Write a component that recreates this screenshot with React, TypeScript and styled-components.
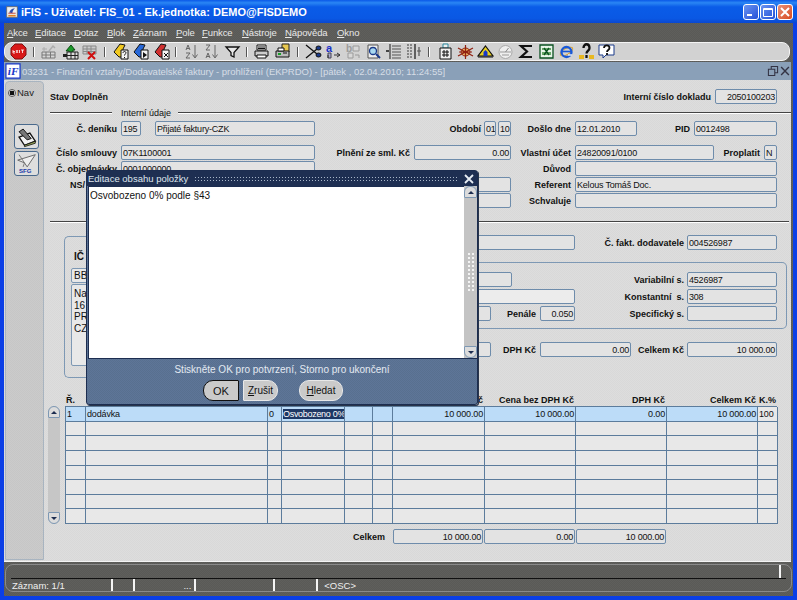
import type { ReactNode } from "react"
import styled, { createGlobalStyle } from "styled-components"

const Global = createGlobalStyle`
  html, body {
    margin: 0;
    padding: 0;
    overflow: hidden;
    background: #0a45e0;
  }
`

const sans = `"Liberation Sans", Arial, sans-serif`

const Window = styled.div`
  position: relative;
  width: 797px;
  height: 600px;
  box-sizing: border-box;
  display: flex;
  flex-direction: column;
  background: #0b3fe6;
  font-family: ${sans};
  overflow: hidden;
`

const TitleBar = styled.div`
  height: 23px;
  flex: none;
  display: flex;
  align-items: center;
  padding: 0 4px 0 5px;
  background: linear-gradient(180deg, #0a58e8 0%, #2a86f4 12%, #0a5ce8 30%, #0a58e4 80%, #0a48d0 100%);
`

const TitleText = styled.span`
  margin-left: 2px;
  flex: 1;
  color: #fff;
  font-size: 11px;
  font-weight: 700;
  white-space: nowrap;
`

const WinButton = styled.div<{ $close?: boolean }>`
  width: 16px;
  height: 16px;
  margin-left: 1px;
  border: 1px solid #fff;
  border-radius: 3px;
  box-sizing: border-box;
  display: flex;
  align-items: center;
  justify-content: center;
  background: ${({ $close }) =>
    $close ? "linear-gradient(135deg, #e89078, #d84a20)" : "linear-gradient(135deg, #6a94f0, #2450d8)"};
`

const Inner = styled.div`
  flex: 1;
  min-height: 0;
  margin: 0 4px 4px 4px;
  display: flex;
  flex-direction: column;
  background: repeating-conic-gradient(#5f5f5c 0 25%, #5a5a57 0 50%) 0 0 / 2px 2px;
`

const MenuBar = styled.div`
  height: 19px;
  flex: none;
  display: flex;
  align-items: center;
  padding-left: 3px;
`

const MenuItem = styled.span<{ $w: number }>`
  width: ${({ $w }) => $w}px;
  flex: none;
  color: #e8e8e8;
  font-size: 9.5px;
  letter-spacing: -0.1px;
  white-space: nowrap;
`

const Mnemonic = styled.span`
  text-decoration: underline;
`

const Toolbar = styled.div`
  height: 19px;
  flex: none;
  margin-right: 3px;
  box-sizing: border-box;
  border: 1px solid #f4f4f4;
  border-radius: 8px;
  display: flex;
  align-items: center;
  background: #d2d2d2;
`

const ToolSlot = styled.span<{ $ml: number }>`
  margin-left: ${({ $ml }) => $ml}px;
  width: 17px;
  height: 17px;
  flex: none;
  display: block;
`

const ToolSep = styled.span<{ $ml: number }>`
  margin-left: ${({ $ml }) => $ml}px;
  width: 1px;
  height: 10px;
  flex: none;
  border-right: 1px solid #fff;
  background: #555;
`

const SubTitle = styled.div`
  height: 18px;
  flex: none;
  margin: 1px 2px 0 0;
  display: flex;
  align-items: center;
  padding-left: 1px;
  background: #8aa0b8;
`

const SubTitleText = styled.span`
  flex: 1;
  margin-left: 1px;
  color: #d6dde6;
  font-size: 9.5px;
  letter-spacing: -0.03px;
  white-space: nowrap;
`

const Main = styled.div`
  height: 482px;
  flex: none;
  margin-right: 2px;
  display: flex;
  box-sizing: border-box;
  background: repeating-conic-gradient(#dddddd 0 25%, #d8d8d8 0 50%) 0 0 / 2px 2px;
  border-bottom: 1px solid #f4f4f4;
`

const SidePanel = styled.div`
  width: 39px;
  flex: none;
  margin: 1px 0 1px 1px;
  box-sizing: border-box;
  border: 1px solid #a8b4c0;
  border-radius: 4px 4px 0 0;
  display: flex;
  flex-direction: column;
  align-items: center;
  background: repeating-conic-gradient(#cbcbcb 0 25%, #c6c6c6 0 50%) 0 0 / 2px 2px;
`

const NavTab = styled.div`
  align-self: flex-start;
  margin: 5px 0 0 2px;
  display: flex;
  align-items: center;
  gap: 1px;
  color: #222;
  font-size: 9.5px;
`

const Radio = styled.span`
  width: 8px;
  height: 8px;
  box-sizing: border-box;
  border: 1px solid #555;
  border-radius: 50%;
  background: radial-gradient(circle, #111 0 2.2px, #eee 2.6px);
`

const SideButton = styled.div<{ $mt: number }>`
  margin: ${({ $mt }) => $mt}px 0 0 3px;
  width: 25px;
  height: 25px;
  box-sizing: border-box;
  border: 1px solid #49698c;
  border-radius: 3px;
  background: #dedede;
`

const Form = styled.div`
  flex: 1;
  min-width: 0;
  padding-top: 9px;
  display: flex;
  flex-direction: column;
`

const Row = styled.div<{ $mt?: number; $h?: number }>`
  margin-top: ${({ $mt }) => $mt ?? 0}px;
  height: ${({ $h }) => $h ?? 15}px;
  flex: none;
  display: flex;
  align-items: stretch;
`

const Label = styled.span<{ $w: number; $left?: boolean; $ml?: number }>`
  width: ${({ $w }) => $w}px;
  margin-left: ${({ $ml }) => $ml ?? 0}px;
  flex: none;
  display: flex;
  align-items: center;
  justify-content: ${({ $left }) => ($left ? "flex-start" : "flex-end")};
  color: #111;
  font-size: 9px;
  font-weight: 700;
  white-space: pre;
`

const Field = styled.span<{ $w: number; $ml?: number; $right?: boolean; $pale?: boolean }>`
  width: ${({ $w }) => $w}px;
  margin-left: ${({ $ml }) => $ml ?? 0}px;
  flex: none;
  box-sizing: border-box;
  display: flex;
  align-items: center;
  justify-content: ${({ $right }) => ($right ? "flex-end" : "flex-start")};
  padding: 0 1px;
  border: 1px solid #6e8cab;
  border-radius: 2px;
  background: ${({ $pale }) => ($pale ? "#ececec" : "#e3e3e3")};
  color: #111;
  font-size: 9px;
  letter-spacing: -0.2px;
  white-space: nowrap;
  overflow: hidden;
`

const SectionRow = styled.div`
  margin: 4px 0 0 6px;
  height: 10px;
  flex: none;
  display: flex;
  align-items: center;
  color: #111;
  font-size: 9px;
`

const Rule = styled.span<{ $w?: number }>`
  display: block;
  height: 1px;
  background: #444;
  border-bottom: 1px solid #fff;
  ${({ $w }) => ($w ? `width: ${$w}px; flex: none;` : "flex: 1;")}
`

const SectionName = styled.span`
  margin: 0 7px 0 9px;
  white-space: nowrap;
`

const Divider = styled.div`
  margin: 13px 2px 12px 6px;
  height: 1px;
  flex: none;
  background: #444;
  border-bottom: 1px solid #fff;
`

const Lower = styled.div`
  margin-left: 20px;
  height: 143px;
  flex: none;
  display: flex;
  align-items: flex-start;
`

const LeftBox = styled.div`
  width: 335px;
  height: 142px;
  margin-top: 1px;
  flex: none;
  box-sizing: border-box;
  padding: 14px 0 0 6px;
  border: 1px solid #7d98b4;
  border-radius: 5px 0 0 5px;
  border-right: none;
`

const BoxLabel = styled.div`
  margin-left: 3px;
  height: 17px;
  color: #111;
  font-size: 10px;
  font-weight: 700;
`

const SupplierCode = styled.div`
  width: 200px;
  height: 15px;
  box-sizing: border-box;
  padding: 0 2px;
  border: 1px solid #7d98b4;
  border-radius: 2px;
  background: #e8e8e8;
  color: #111;
  font-size: 10px;
  line-height: 13px;
`

const Address = styled.div`
  width: 200px;
  height: 82px;
  margin-top: 1px;
  box-sizing: border-box;
  padding: 3px 2px;
  border: 1px solid #7d98b4;
  border-radius: 2px;
  background: #e8e8e8;
  color: #111;
  font-size: 10px;
  line-height: 11.6px;
`

const RightCol = styled.div`
  width: 388px;
  flex: none;
  display: flex;
  flex-direction: column;
`

const RightBox = styled.div`
  margin-top: 12px;
  height: 67px;
  box-sizing: border-box;
  padding: 9px 0 0;
  border: 1px solid #7d98b4;
  border-left: none;
  border-radius: 0 5px 5px 0;
  display: flex;
  flex-direction: column;
  gap: 2px;
`

const TableHeader = styled.div`
  margin: 15px 0 0 21px;
  width: 712px;
  height: 13px;
  flex: none;
  display: grid;
  grid-template-columns: 20px 182px 14px 63px 28px 20px 92px 91px 91px 91px 20px;
  align-items: center;
`

const HeadCell = styled.span<{ $left?: boolean }>`
  padding: 0 1px;
  text-align: ${({ $left }) => ($left ? "left" : "right")};
  color: #111;
  font-size: 9px;
  font-weight: 700;
  white-space: nowrap;
`

const TableWrap = styled.div`
  margin-left: 4px;
  height: 118px;
  flex: none;
  display: flex;
  gap: 5px;
`

const VScroll = styled.div`
  width: 12px;
  flex: none;
  display: flex;
  flex-direction: column;
  justify-content: space-between;
  background: #c6c6c6;
  border-radius: 6px;
`

const ScrollEnd = styled.div<{ $down?: boolean }>`
  height: 12px;
  box-sizing: border-box;
  border: 1px solid #7d98b4;
  border-radius: ${({ $down }) => ($down ? "1px 1px 6px 6px" : "6px 6px 1px 1px")};
  background: #dcdcdc;
  display: flex;
  align-items: center;
  justify-content: center;

  &::after {
    content: "";
    border-left: 3px solid transparent;
    border-right: 3px solid transparent;
    ${({ $down }) => ($down ? "border-top: 3px solid #1c2d50;" : "border-bottom: 3px solid #1c2d50;")}
  }
`

const Table = styled.div`
  width: 712px;
  flex: none;
  display: grid;
  grid-template-columns: 20px 182px 14px 63px 28px 20px 92px 91px 91px 91px 20px;
  grid-template-rows: repeat(8, 1fr);
  border-top: 1px solid #5c7c9c;
  border-left: 1px solid #5c7c9c;
  box-sizing: border-box;
`

const Cell = styled.span<{ $on?: boolean; $right?: boolean }>`
  box-sizing: border-box;
  padding: 0 1px;
  min-width: 0;
  display: flex;
  align-items: center;
  justify-content: ${({ $right }) => ($right ? "flex-end" : "flex-start")};
  border-right: 1px solid #5c7c9c;
  border-bottom: 1px solid #5c7c9c;
  background: ${({ $on }) => ($on ? "#bcdcf8" : "#e8e8e8")};
  color: #111;
  font-size: 9px;
  letter-spacing: -0.15px;
  white-space: nowrap;
  overflow: hidden;
`

const Marked = styled.span`
  background: #1e3864;
  color: #fff;
  letter-spacing: -0.3px;
`

const StatusBar = styled.div`
  flex: 1;
  min-height: 0;
  margin: 2px 1px 4px 1px;
  box-sizing: border-box;
  border: 1px solid #8a8a8a;
  border-radius: 8px;
  display: flex;
  flex-direction: column;
`

const StatusTop = styled.div`
  height: 13px;
  flex: none;
  margin: 0 5px;
  border-bottom: 1px solid #111;
  display: flex;
  justify-content: flex-end;
`

const StatusCells = styled.div`
  flex: 1;
  margin-left: 5px;
  display: flex;
  align-items: stretch;
  color: #f0f0f0;
  font-size: 9.5px;
`

const StatusCell = styled.span<{ $w: number; $noline?: boolean; $right?: boolean }>`
  width: ${({ $w }) => $w}px;
  flex: none;
  box-sizing: border-box;
  padding: 0 0 0 1px;
  display: flex;
  align-items: center;
  justify-content: ${({ $right }) => ($right ? "flex-end" : "flex-start")};
  ${({ $noline }) => ($noline ? "" : "border-right: 2px solid #f4f4f4;")}
  white-space: nowrap;
`

const EndTick = styled.span`
  width: 2px;
  margin-right: 5px;
  background: #f4f4f4;
`

const Dialog = styled.div`
  position: absolute;
  top: 170px;
  left: 86px;
  width: 392px;
  height: 235px;
  box-sizing: border-box;
  border: 1px solid #1c2d50;
  border-radius: 3px;
  display: flex;
  flex-direction: column;
  background: repeating-conic-gradient(#5e7598 0 25%, #58708f 0 50%) 0 0 / 2px 2px;
  box-shadow: 1px 1px 0 #29354a;
`

const DialogTitle = styled.div`
  height: 15px;
  flex: none;
  display: flex;
  align-items: center;
  padding: 0 3px 0 1px;
  background: #1e2f52;
  color: #dfe6ee;
  font-size: 9.5px;
`

const Dots = styled.span`
  flex: 1;
  height: 6px;
  margin: 0 5px 0 6px;
  background: radial-gradient(circle, #a8b6c8 0.8px, transparent 1px) 0 0 / 3px 3px;
`

const DialogBody = styled.div`
  height: 172px;
  flex: none;
  display: flex;
  border-bottom: 1px solid #1c2d50;
  margin-left: 1px;
`

const TextArea = styled.div`
  flex: 1;
  box-sizing: border-box;
  padding: 2px 1px;
  background: #fff;
  color: #111;
  font-size: 10px;
  line-height: 14px;
  border-top: 1px solid #1c2d50;
  border-left: 1px solid #1c2d50;
`

const DialogScroll = styled.div`
  width: 13px;
  flex: none;
  display: flex;
  flex-direction: column;
  justify-content: space-between;
  background: #c4c4c4;
`

const Grip = styled.div`
  width: 7px;
  height: 40px;
  align-self: center;
  background: radial-gradient(circle, #f4f4f4 0.8px, transparent 1.1px) 0 0 / 4px 4px;
`

const Hint = styled.div`
  margin-top: 5px;
  text-align: center;
  color: #e4eaf2;
  font-size: 10px;
  line-height: 12px;
`

const Buttons = styled.div`
  margin: 4px 0 0 116px;
  display: flex;
  align-items: stretch;
  height: 21px;
`

const Btn = styled.div<{ $w: number; $ml: number; $kind: "ok" | "plain" | "pill" }>`
  width: ${({ $w }) => $w}px;
  margin-left: ${({ $ml }) => $ml}px;
  box-sizing: border-box;
  display: flex;
  align-items: center;
  justify-content: center;
  background: #cacaca;
  color: #111;
  font-size: ${({ $kind }) => ($kind === "ok" ? "11px" : "10px")};
  border: 1px solid ${({ $kind }) => ($kind === "ok" ? "#111" : "#e8e8e8")};
  border-radius: ${({ $kind }) =>
    $kind === "ok" ? "10px 1px 1px 10px" : $kind === "plain" ? "1px 10px 10px 1px" : "10px"};
`

const Hotkey = styled.span`
  text-decoration: underline;
`

function Svg({ children, size = 17 }: { children: ReactNode; size?: number }) {
  return (
    <svg width={size} height={size} viewBox="0 0 17 17" fill="none">
      {children}
    </svg>
  )
}

const recordBase = (
  <>
    <path d="M2 9h13v6H2z" fill="#ddd" stroke="#222" />
    <path d="M6 9v6M10.500 9v6M2 12h13" stroke="#222" />
  </>
)

const tag = (color: string, mark: ReactNode) => (
  <>
    <path d="M7 1 1 9l5 5h4V6l2-4z" fill={color} stroke="#111" />
    <path d="M8 7h7v9H8z" fill="#f4f4f4" stroke="#111" />
    {mark}
  </>
)

const icons: Record<string, ReactNode> = {
  exit: (
    <>
      <path d="M5 1h7l4 4v7l-4 4H5l-4-4V5z" fill="#d81818" stroke="#801010" />
      <path d="M3 7v3h2M3 8.500h2M6 7l2 3M8 7l-2 3M9.500 7v3M11 7h3M12.500 7v3" stroke="#fff" strokeWidth=".8" />
    </>
  ),
  add: (
    <g opacity=".5">
      {recordBase}
      <path d="M9 8 13 3l2 2" stroke="#888" strokeWidth="1.500" />
      <path d="M2 6h5M4 4v4" stroke="#888" />
    </g>
  ),
  go: (
    <>
      <path d="M9 2 4 8h3v2h4V7h2z" fill="#1a9a2a" stroke="#0a4a10" />
      <path d="M5 9h11v7H5z" fill="#ddd" stroke="#222" />
      <path d="M9 9v7M13 9v7M5 12.500h11" stroke="#222" />
      <path d="M1 11h4v3H1z" fill="#222" />
    </>
  ),
  del: (
    <>
      <path d="M2 3h13v8H2z" fill="#ccc" stroke="#888" />
      <path d="M2 6h13M2 8.500h13M6 3v8M10 3v8" stroke="#888" />
      <path d="m7 9 7 7M14 9l-7 7" stroke="#d01010" strokeWidth="2" />
    </>
  ),
  ask: tag("#f0c820", <path d="M10 10c0-2 3-2 3 0 0 1-1.500 1-1.500 2.500M11.500 14v1" stroke="#111" />),
  run: tag("#2868d8", <path d="m10 9 4 3-4 3z" fill="#111" />),
  cancel: tag("#d03030", <path d="m10 10 4 4M14 10l-4 4" stroke="#111" />),
  sortA: (
    <>
      <path d="M3 7 5 2l2 5M3.500 5.500h3M3 10h4l-4 5h4" stroke="#666" />
      <path d="M12 2v12M9.500 11.500 12 15l2.500-3.500" stroke="#666" />
    </>
  ),
  sortZ: (
    <>
      <path d="M3 2h4L3 7h4M3 15l2-5 2 5M3.500 13.500h3" stroke="#666" />
      <path d="M12 2v12M9.500 11.500 12 15l2.500-3.500" stroke="#666" />
    </>
  ),
  filter: <path d="M2 4h13L10 9.500V14l-3-1.500v-3z" fill="#e8e8e8" stroke="#111" strokeWidth="1.300" />,
  print: (
    <>
      <path d="M4 2h9v5H4z" fill="#fff" stroke="#111" />
      <path d="M2 8h13v5H2z" fill="#ccc" stroke="#111" />
      <path d="M4 12h9v3H4z" fill="#fff" stroke="#111" />
      <path d="M5 4h7M5 5.500h7" stroke="#111" />
    </>
  ),
  printColor: (
    <>
      <path d="M8 1h7v8H8z" fill="#e8c850" stroke="#222" />
      <path d="M2 8h13v6H2z" fill="#bbb" stroke="#111" />
      <path d="M4 5h6v3H4z" fill="#fff" stroke="#111" />
      <path d="M4 10h3v2H4z" fill="#18a028" />
      <path d="M9 10h4" stroke="#111" />
    </>
  ),
  cut: (
    <>
      <path d="m1 2 11 9M1 15 12 6" stroke="#111" strokeWidth="1.300" />
      <ellipse cx="13.500" cy="5" rx="2.500" ry="2" fill="#1a3a8a" stroke="#111" />
      <ellipse cx="13.500" cy="12" rx="2.500" ry="2" fill="#1a3a8a" stroke="#111" />
    </>
  ),
  copy: (
    <>
      <text x="1" y="9" fontSize="11" fontWeight="700" fill="#1830c8" fontFamily="Liberation Sans">a</text>
      <path d="M3 10h3v5H3z" fill="#aac" stroke="#445" />
      <path d="M9 12h6M12 10l3 2-3 2" stroke="#333" />
      <path d="M3 12v3" stroke="#333" />
    </>
  ),
  paste: (
    <g opacity=".6">
      <text x="1" y="9" fontSize="10" fontWeight="700" fill="#777" fontFamily="Liberation Sans">b</text>
      <path d="M8 3h6v5H8zM3 10h5v5H3z" fill="#ddd" stroke="#777" />
      <path d="M10 12h4v3" stroke="#777" />
    </g>
  ),
  find: (
    <>
      <path d="M3 2h10v13H3z" fill="#eee" stroke="#555" />
      <path d="M5 5h6M5 8h6" stroke="#888" />
      <circle cx="8" cy="8" r="3.500" fill="#a8d8f0" stroke="#1a3a8a" strokeWidth="1.300" />
      <path d="m11 11 4 4" stroke="#1a3a8a" strokeWidth="2" />
    </>
  ),
  rows: (
    <>
      <path d="M5 1v15" stroke="#444" strokeWidth="1.300" />
      <path d="M1 8h3" stroke="#444" strokeWidth="2" />
      <path d="M7 3h9M7 6h9M7 9h9M7 12h9M7 15h9" stroke="#555" />
    </>
  ),
  cols: (
    <>
      <path d="M2 1v15M5 1v15" stroke="#555" strokeDasharray="2 1" strokeWidth="1.200" />
      <path d="M9 1v15" stroke="#222" strokeWidth="1.300" />
      <path d="M11 8h4M13 4v9" stroke="#555" strokeWidth="1.200" />
    </>
  ),
  sheet: (
    <>
      <path d="M6 1h5v4H6z" fill="#eee" stroke="#2a8aa0" />
      <path d="M3 5h11v11H3z" fill="#f0f0f0" stroke="#111" />
      <path d="M5 9h7M5 12h7M7 7v7M10 7v7" stroke="#111" />
    </>
  ),
  bug: (
    <>
      <ellipse cx="8.500" cy="9" rx="4.500" ry="4" fill="#e8b060" stroke="#902010" />
      <path d="M1 5l15 8M16 5 1 13M8.500 2v14M2 9h13" stroke="#902010" strokeWidth="1.200" />
    </>
  ),
  roof: (
    <>
      <path d="M8.500 3 16 13H1z" fill="#e8d020" stroke="#111" strokeWidth="1.200" />
      <path d="M6.500 9 8.500 7l2 2v4h-4z" fill="#1838c8" />
      <path d="M1 14h15" stroke="#111" />
    </>
  ),
  gauge: (
    <>
      <circle cx="8.500" cy="9" r="6.500" fill="#eee" stroke="#aaa" />
      <path d="M3 9h11" stroke="#999" />
      <path d="m8.500 9 3-4" stroke="#888" />
      <path d="M5 12h7" stroke="#999" />
    </>
  ),
  sum: <path d="M14 3H3l6 5.500L3 14h11" stroke="#111" strokeWidth="2.200" />,
  excel: (
    <>
      <path d="M2 2h13v13H2z" fill="#e8f4e8" stroke="#0a5020" strokeWidth="1.300" />
      <path d="M4 5h9v2H4zM4 9h9v3H4z" fill="#68a868" />
      <path d="m6 5 5 7M11 5l-5 7" stroke="#0a5020" strokeWidth="1.300" />
    </>
  ),
  web: (
    <>
      <ellipse cx="8.500" cy="8.500" rx="7" ry="3" stroke="#e0a020" transform="rotate(-30 8.500 8.500)" />
      <circle cx="8.500" cy="9" r="5" fill="none" stroke="#1858d8" strokeWidth="2.300" />
      <path d="M4 8.500h9" stroke="#1858d8" strokeWidth="1.600" />
      <path d="M10 12h4" stroke="#d8e4f8" strokeWidth="1.600" />
    </>
  ),
  help: (
    <>
      <path d="M1 12h5v4H1zM11 12h5v4h-5z" fill="#e8b820" />
      <path d="M5.500 5c0-5 6-5 6 0 0 3-3 2.500-3 5.500" stroke="#111" strokeWidth="2.300" />
      <path d="M8.500 12v3" stroke="#111" strokeWidth="2.300" />
    </>
  ),
  helpBox: (
    <>
      <path d="M1 2h15v10H8l-3 3v-3H1z" fill="#fff" stroke="#1a3a8a" />
      <path d="M6 5c0-3.500 5.500-3.500 5.500 0 0 2-2.500 2-2.500 4M9 10v2" stroke="#111" strokeWidth="1.800" />
    </>
  ),
}

const toolItems: { x: number; icon?: string }[] = [
  { x: 18, icon: "exit" },
  { x: 33 },
  { x: 47, icon: "add" },
  { x: 69, icon: "go" },
  { x: 88, icon: "del" },
  { x: 103 },
  { x: 119, icon: "ask" },
  { x: 139, icon: "run" },
  { x: 160, icon: "cancel" },
  { x: 173 },
  { x: 188, icon: "sortA" },
  { x: 208, icon: "sortZ" },
  { x: 229, icon: "filter" },
  { x: 243 },
  { x: 257, icon: "print" },
  { x: 278, icon: "printColor" },
  { x: 293 },
  { x: 308, icon: "cut" },
  { x: 328, icon: "copy" },
  { x: 348, icon: "paste" },
  { x: 368, icon: "find" },
  { x: 388, icon: "rows" },
  { x: 409, icon: "cols" },
  { x: 423 },
  { x: 439, icon: "sheet" },
  { x: 459, icon: "bug" },
  { x: 479, icon: "roof" },
  { x: 499, icon: "gauge" },
  { x: 520, icon: "sum" },
  { x: 540, icon: "excel" },
  { x: 560, icon: "web" },
  { x: 580, icon: "help" },
  { x: 600, icon: "helpBox" },
]

function ToolIcons() {
  let edge = 5
  return (
    <>
      {toolItems.map((item) => {
        if (!item.icon) {
          const ml = item.x - edge
          edge = item.x + 1
          return <ToolSep key={item.x} $ml={ml} />
        }
        const left = item.x - 8
        const ml = left - edge
        edge = left + 17
        return (
          <ToolSlot key={item.x} $ml={ml}>
            <Svg>{icons[item.icon]}</Svg>
          </ToolSlot>
        )
      })}
    </>
  )
}

const menu: [number, string, string][] = [
  [28, "A", "kce"],
  [39, "E", "ditace"],
  [33, "D", "otaz"],
  [26, "B", "lok"],
  [43, "Z", "áznam"],
  [26, "P", "ole"],
  [40, "F", "unkce"],
  [43, "N", "ástroje"],
  [52, "N", "ápověda"],
  [30, "O", "kno"],
]

const emptyRow = Array.from({ length: 11 })

export default function App() {
  return (
    <Window>
      <Global />
      <TitleBar>
        <Svg size={14}>
          <path d="M2 2h13v13H2z" fill="#f0f0f0" stroke="#666" />
          <path d="M4 12h9v2H4z" fill="#e08020" />
          <path d="M5 9c2-4 5-5 7-5-2 2-3 4-3 6z" fill="#3050b0" />
          <path d="M4 10h9" stroke="#c03020" />
        </Svg>
        <TitleText>iFIS - Uživatel: FIS_01 - Ek.jednotka: DEMO@FISDEMO</TitleText>
        <WinButton>
          <svg width="10" height="10" viewBox="0 0 10 10">
            <path d="M1 7h5v2H1z" fill="#fff" />
          </svg>
        </WinButton>
        <WinButton>
          <svg width="10" height="10" viewBox="0 0 10 10">
            <path d="M.5 1.500h9v8h-9zM.5 2.500h9" fill="none" stroke="#fff" />
          </svg>
        </WinButton>
        <WinButton $close>
          <svg width="10" height="10" viewBox="0 0 10 10">
            <path d="m1 1 8 8M9 1 1 9" stroke="#fff" strokeWidth="2" />
          </svg>
        </WinButton>
      </TitleBar>
      <Inner>
        <MenuBar>
          {menu.map(([w, key, rest]) => (
            <MenuItem key={key + rest} $w={w}>
              <Mnemonic>{key}</Mnemonic>
              {rest}
            </MenuItem>
          ))}
        </MenuBar>
        <Toolbar>
          <ToolIcons />
        </Toolbar>
        <SubTitle>
          <Svg size={16}>
            <path d="M1 1h15v15H1z" fill="#fff" stroke="#1838c8" strokeWidth="1.300" />
            <text x="3" y="13" fontSize="12" fontStyle="italic" fontWeight="700" fill="#1838c8" fontFamily="Liberation Serif">iF</text>
          </Svg>
          <SubTitleText>
            03231 - Finanční vztahy/Dodavatelské faktury - prohlížení (EKPRDO) - [pátek , 02.04.2010; 11:24:55]
          </SubTitleText>
          <Svg size={12}>
            <path d="M2 6h9v9H2zM6 6V2h9v9h-4" stroke="#334" strokeWidth="1.500" />
          </Svg>
          <Svg size={12}>
            <path d="m3 3 11 11M14 3 3 14" stroke="#334" strokeWidth="2" />
          </Svg>
        </SubTitle>
        <Main>
          <SidePanel>
            <NavTab>
              <Radio />
              Nav
            </NavTab>
            <SideButton $mt={26}>
              <Svg size={23}>
                <path d="M3 9l8-3 4 6-8 3z" fill="#f4f4f4" stroke="#111" />
                <path d="m3 5 6 6 3-1L6 3z" fill="#777" stroke="#111" strokeWidth=".7" />
                <path d="M7 15l8-3v1.500l-8 2.500z" fill="#a8b860" stroke="#111" strokeWidth=".6" />
              </Svg>
            </SideButton>
            <SideButton $mt={2}>
              <Svg size={23}>
                <path d="M2 6 15 2 9 11 7 8z" fill="#eee" stroke="#666" strokeWidth=".7" />
                <path d="M3 2l4 6-1 3" stroke="#777" strokeWidth=".7" />
                <text x="3" y="15.500" fontSize="4.500" fontWeight="700" fill="#1838a8" fontFamily="Liberation Sans">SFG</text>
              </Svg>
            </SideButton>
          </SidePanel>
          <Form>
            <Row>
              <Label $w={17} $ml={6} $left>Stav</Label>
              <Label $w={40} $ml={5} $left>Doplněn</Label>
              <Label $w={599}>Interní číslo dokladu</Label>
              <Field $w={62} $ml={4} $right>2050100203</Field>
            </Row>
            <SectionRow>
              <Rule $w={62} />
              <SectionName>Interní údaje</SectionName>
              <Rule />
            </SectionRow>
            <Row $mt={3}>
              <Label $w={73}>Č. deníku</Label>
              <Field $w={20} $ml={4}>195</Field>
              <Field $w={160} $ml={14}>Přijaté faktury-CZK</Field>
              <Label $w={166}>Období</Label>
              <Field $w={12} $ml={3}>01</Field>
              <Field $w={13} $ml={2}>10</Field>
              <Label $w={60}>Došlo dne</Label>
              <Field $w={62} $ml={4}>12.01.2010</Field>
              <Label $w={53}>PID</Label>
              <Field $w={83} $ml={4}>0012498</Field>
            </Row>
            <Row $mt={9}>
              <Label $w={73}>Číslo smlouvy</Label>
              <Field $w={194} $ml={4}>07K1100001</Field>
              <Label $w={95}>Plnění ze sml. Kč</Label>
              <Field $w={97} $ml={4} $right>0.00</Field>
              <Label $w={60}>Vlastní účet</Label>
              <Field $w={139} $ml={4}>24820091/0100</Field>
              <Label $w={46}>Proplatit</Label>
              <Field $w={13} $ml={4}>N</Field>
            </Row>
            <Row $mt={1}>
              <Label $w={73}>Č. objednávky</Label>
              <Field $w={194} $ml={4}>0001000000</Field>
              <Label $w={256}>Důvod</Label>
              <Field $w={202} $ml={4} />
            </Row>
            <Row $mt={1}>
              <Label $w={47} $ml={26} $left>NS/</Label>
              <Field $w={194} $ml={4} />
              <Field $w={96} $ml={100} />
              <Label $w={60}>Referent</Label>
              <Field $w={202} $ml={4}>Kelous Tomáš Doc.</Field>
            </Row>
            <Row $mt={1}>
              <Field $w={96} $ml={371} />
              <Label $w={60}>Schvaluje</Label>
              <Field $w={202} $ml={4} />
            </Row>
            <Divider />
            <Lower>
              <LeftBox>
                <BoxLabel>IČ</BoxLabel>
                <SupplierCode>BB</SupplierCode>
                <Address>
                  Na
                  <br />
                  16
                  <br />
                  PR
                  <br />
                  CZ
                </Address>
              </LeftBox>
              <RightCol>
                <Row>
                  <Field $w={176} />
                  <Label $w={109}>Č. fakt. dodavatele</Label>
                  <Field $w={90} $ml={3}>004526987</Field>
                </Row>
                <RightBox>
                  <Row>
                    <Field $w={113} />
                    <Label $w={172}>Variabilní s.</Label>
                    <Field $w={90} $ml={3}>4526987</Field>
                  </Row>
                  <Row>
                    <Field $w={176} $pale />
                    <Label $w={109}>Konstantní  s.</Label>
                    <Field $w={90} $ml={3}>308</Field>
                  </Row>
                  <Row>
                    <Field $w={92} />
                    <Label $w={45}>Penále</Label>
                    <Field $w={35} $ml={4} $right>0.050</Field>
                    <Label $w={109}>Specifický s.</Label>
                    <Field $w={90} $ml={3} />
                  </Row>
                </RightBox>
                <Row $mt={13}>
                  <Field $w={92} />
                  <Label $w={45}>DPH Kč</Label>
                  <Field $w={91} $ml={4} $right>0.00</Field>
                  <Label $w={53}>Celkem Kč</Label>
                  <Field $w={90} $ml={3} $right>10 000.00</Field>
                </Row>
              </RightCol>
            </Lower>
            <TableHeader>
              <HeadCell $left>Ř.</HeadCell>
              <HeadCell />
              <HeadCell />
              <HeadCell />
              <HeadCell />
              <HeadCell />
              <HeadCell>Kč</HeadCell>
              <HeadCell>Cena bez DPH Kč</HeadCell>
              <HeadCell>DPH Kč</HeadCell>
              <HeadCell>Celkem Kč</HeadCell>
              <HeadCell>K.%</HeadCell>
            </TableHeader>
            <TableWrap>
              <VScroll>
                <ScrollEnd />
                <ScrollEnd $down />
              </VScroll>
              <Table>
                <Cell $on>1</Cell>
                <Cell $on>dodávka</Cell>
                <Cell $on>0</Cell>
                <Cell $on>
                  <Marked>Osvobozeno 0%</Marked>
                </Cell>
                <Cell $on />
                <Cell $on />
                <Cell $on $right>10 000.00</Cell>
                <Cell $on $right>10 000.00</Cell>
                <Cell $on $right>0.00</Cell>
                <Cell $on $right>10 000.00</Cell>
                <Cell>100</Cell>
                {Array.from({ length: 7 }).flatMap((_, r) =>
                  emptyRow.map((__, c) => <Cell key={`${r}-${c}`} />),
                )}
              </Table>
            </TableWrap>
            <Row $mt={5}>
              <Label $w={341}>Celkem</Label>
              <Field $w={90} $ml={8} $right>10 000.00</Field>
              <Field $w={91} $ml={1} $right>0.00</Field>
              <Field $w={90} $ml={1} $right>10 000.00</Field>
            </Row>
          </Form>
        </Main>
        <StatusBar>
          <StatusTop>
            <EndTick />
          </StatusTop>
          <StatusCells>
            <StatusCell $w={102}>Záznam: 1/1</StatusCell>
            <StatusCell $w={22} />
            <StatusCell $w={61} $right>...&nbsp;</StatusCell>
            <StatusCell $w={79} />
            <StatusCell $w={43} />
            <StatusCell $w={100} $noline>&nbsp;&nbsp;&lt;OSC&gt;</StatusCell>
          </StatusCells>
        </StatusBar>
      </Inner>
      <Dialog>
        <DialogTitle>
          Editace obsahu položky
          <Dots />
          <svg width="10" height="10" viewBox="0 0 10 10">
            <path d="m1 1 8 8M9 1 1 9" stroke="#e8eef4" strokeWidth="1.800" />
          </svg>
        </DialogTitle>
        <DialogBody>
          <TextArea>Osvobozeno 0% podle §43</TextArea>
          <DialogScroll>
            <ScrollEnd />
            <Grip />
            <ScrollEnd $down />
          </DialogScroll>
        </DialogBody>
        <Hint>Stiskněte OK pro potvrzení, Storno pro ukončení</Hint>
        <Buttons>
          <Btn $w={36} $ml={0} $kind="ok">OK</Btn>
          <Btn $w={35} $ml={4} $kind="plain"><span><Hotkey>Z</Hotkey>rušit</span></Btn>
          <Btn $w={44} $ml={21} $kind="pill"><span><Hotkey>H</Hotkey>ledat</span></Btn>
        </Buttons>
      </Dialog>
    </Window>
  )
}
